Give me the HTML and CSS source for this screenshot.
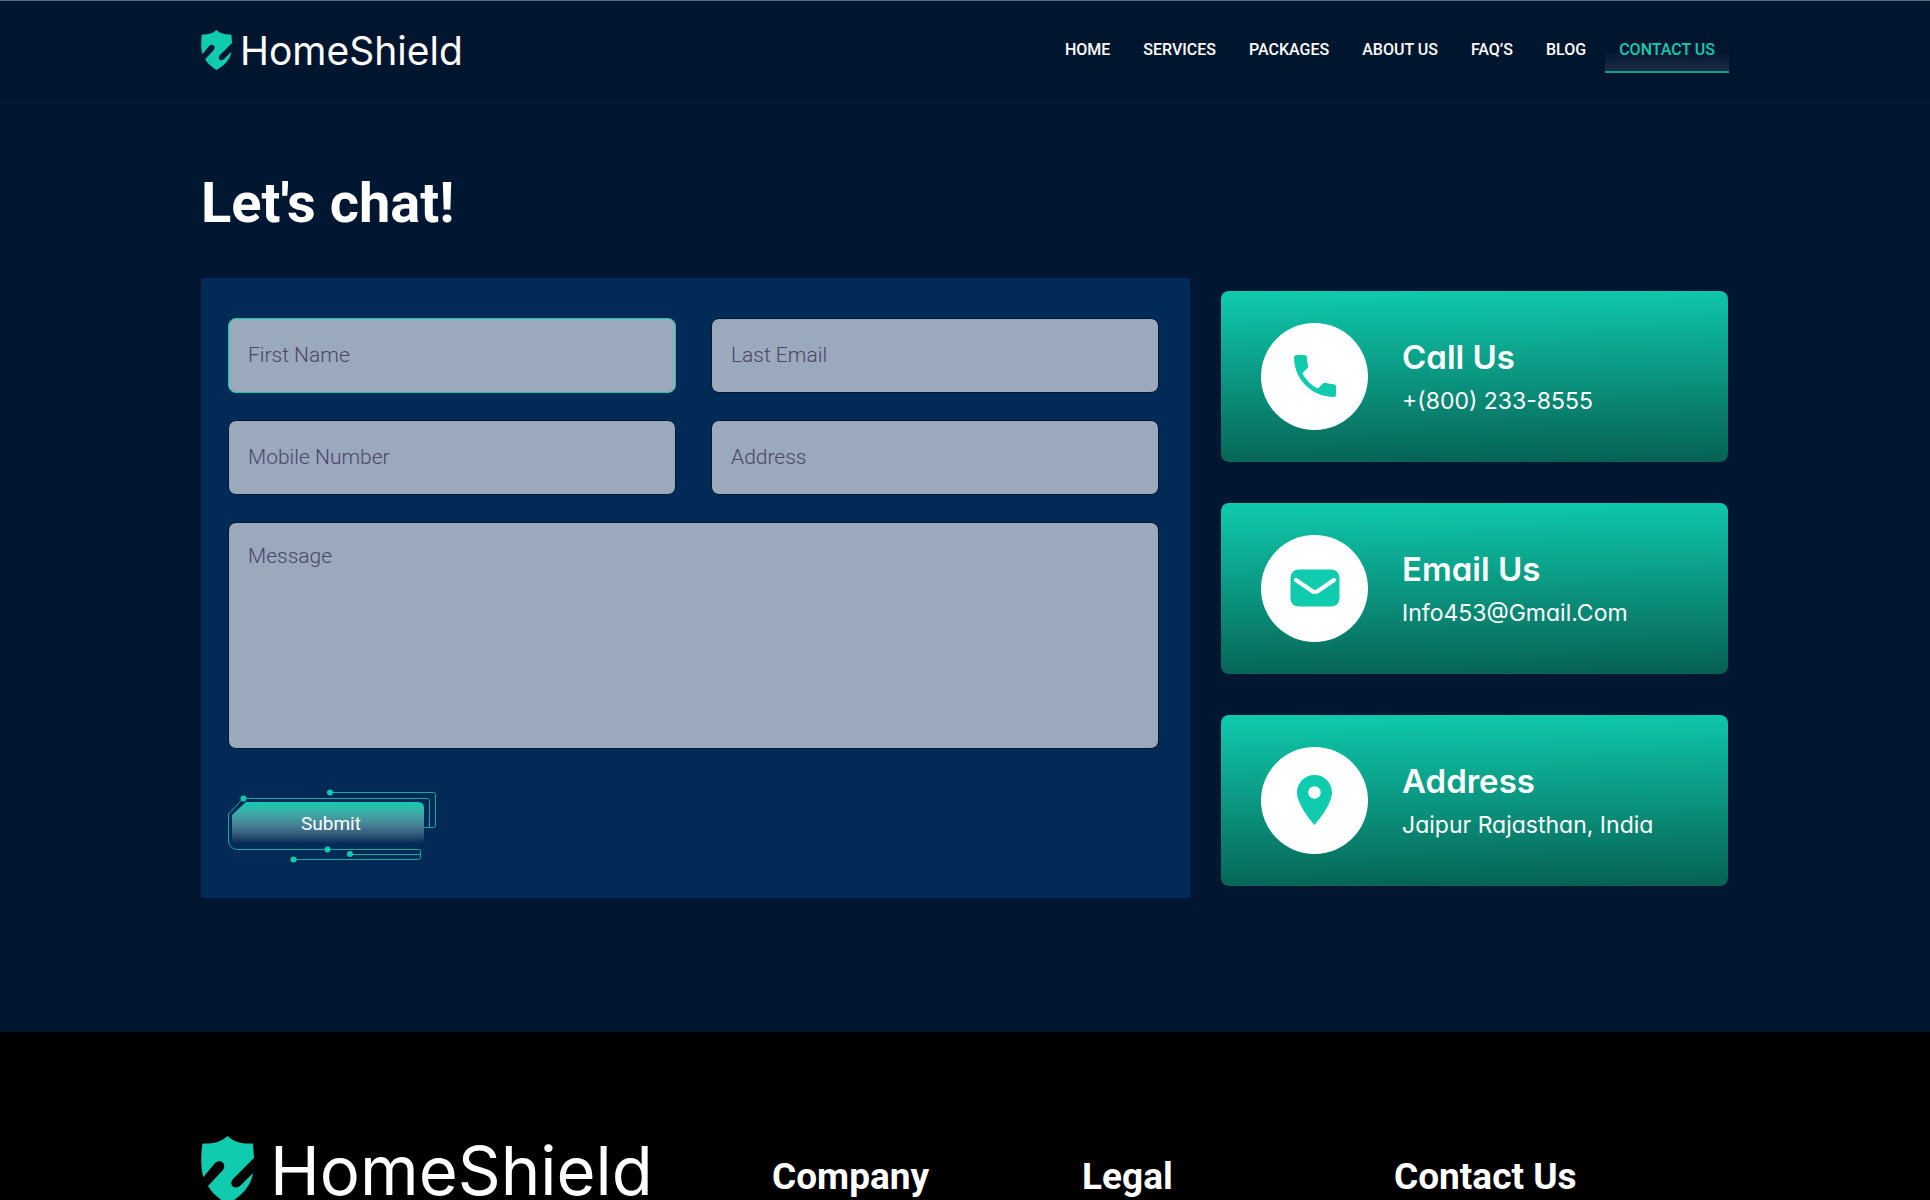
FILE: index.html
```
<!DOCTYPE html>
<html lang="en">
  <head>
    <meta charset="UTF-8" />
    <meta name="viewport" content="width=device-width, initial-scale=1.0" />
    <title>HomeShield - Contact Us</title>
    <link rel="stylesheet" href="styles.css">
  </head>
  <body>
    <header class="header">
      <div class="container header-inner">
        <a href="#" class="logo">
          <svg class="logo-mark" viewBox="0 0 53 68">
            <path d="M26.500 0C34 7 42 8 52 7.500L53 22L32 43C27 49 34 55 40 49L52 37C50 50 41 60 26.500 68C18 63 11 57 7 50L22 34C26 28 20 22 14 27L2.500 41C0 35 -0.500 20 1.500 7.500C10 8 19 7 26.500 0Z"/>
          </svg>
          <span>HomeShield</span>
        </a>
        <nav class="nav">
          <a href="#">Home</a>
          <a href="#">Services</a>
          <a href="#">Packages</a>
          <a href="#">About Us</a>
          <a href="#">FAQ’S</a>
          <a href="#">Blog</a>
          <a href="#" class="active">Contact Us</a>
        </nav>
      </div>
    </header>

    <main class="container main">
      <h1>Let's chat!</h1>
      <div class="contact">
        <form class="form">
          <input type="text" class="field current" name="first" placeholder="First Name" aria-label="First Name" />
          <input type="text" class="field" name="last" placeholder="Last Email" aria-label="Last Email" />
          <input type="tel" class="field" name="mobile" placeholder="Mobile Number" aria-label="Mobile Number" />
          <input type="text" class="field" name="address" placeholder="Address" aria-label="Address" />
          <textarea class="field message" name="message" placeholder="Message" aria-label="Message"></textarea>
          <button type="submit" class="btn">
            <svg class="btn-frame" viewBox="0 0 212 76">
              <defs>
                <linearGradient id="btnFill" x1="0" y1="0" x2="0" y2="1">
                  <stop offset="0" stop-color="#11cbae"/>
                  <stop offset="1" stop-color="#fff" stop-opacity="0"/>
                </linearGradient>
              </defs>
              <path fill="url(#btnFill)" d="M18 14H190Q196 14 196 20V50Q196 56 190 56H10Q4 56 4 50V27Z"/>
              <g class="btn-lines">
                <path d="M102 4.500H205.500Q207.500 4.500 207.500 6.500V37.500Q207.500 39.500 205.500 39.500H196"/>
                <path d="M15 10.500H199.500Q201.500 10.500 201.500 12.500V39.500"/>
                <path d="M15 10.500L0.500 26V53Q1 60 8.500 61.500H190.500Q192.500 61.500 192.500 63.500V69.500Q192.500 71.500 190.500 71.500H66"/>
                <path d="M122 66.500H192"/>
              </g>
              <g class="btn-dots">
                <circle cx="102" cy="4.500" r="3"/>
                <circle cx="15.500" cy="10.500" r="3"/>
                <circle cx="99.500" cy="61.500" r="3"/>
                <circle cx="122" cy="66" r="3"/>
                <circle cx="65.500" cy="71.500" r="3"/>
              </g>
            </svg>
            <span>Submit</span>
          </button>
        </form>

        <div class="cards">
          <div class="card">
            <div class="card-icon">
              <svg viewBox="0 0 24 24" width="56" height="56">
                <path d="M6.620 10.790c1.440 2.830 3.760 5.140 6.590 6.590l2.200-2.200c.270-.270.670-.360 1.020-.240 1.120.370 2.330.570 3.570.570.550 0 1 .450 1 1V20c0 .550-.450 1-1 1C10.610 21 3 13.390 3 4c0-.550.450-1 1-1h3.500c.550 0 1 .450 1 1 0 1.250.200 2.450.570 3.570.110.350.030.740-.250 1.020l-2.200 2.200z"/>
              </svg>
            </div>
            <div>
              <h2>Call Us</h2>
              <p>+(800) 233-8555</p>
            </div>
          </div>
          <div class="card">
            <div class="card-icon">
              <svg viewBox="0 0 50 38" width="50" height="38">
                <rect x="0.500" y="0.500" width="49" height="37" rx="8"/>
                <path class="flap" d="M6 11L22 22Q25 24 28 22L44 11"/>
              </svg>
            </div>
            <div>
              <h2>Email Us</h2>
              <p>Info453@Gmail.Com</p>
            </div>
          </div>
          <div class="card">
            <div class="card-icon">
              <svg viewBox="5 2 14 20" width="35" height="50">
                <path d="M12 2C8.130 2 5 5.130 5 9c0 5.250 7 13 7 13s7-7.750 7-13c0-3.870-3.130-7-7-7zm0 9.500a2.500 2.500 0 0 1 0-5 2.500 2.500 0 0 1 0 5z"/>
              </svg>
            </div>
            <div>
              <h2>Address</h2>
              <p>Jaipur Rajasthan, India</p>
            </div>
          </div>
        </div>
      </div>
    </main>

    <footer class="footer">
      <div class="container footer-inner">
        <a href="#" class="logo logo-big">
          <svg class="logo-mark" viewBox="0 0 53 68">
            <path d="M26.500 0C34 7 42 8 52 7.500L53 22L32 43C27 49 34 55 40 49L52 37C50 50 41 60 26.500 68C18 63 11 57 7 50L22 34C26 28 20 22 14 27L2.500 41C0 35 -0.500 20 1.500 7.500C10 8 19 7 26.500 0Z"/>
          </svg>
          <span>HomeShield</span>
        </a>
        <h3>Company</h3>
        <h3>Legal</h3>
        <h3>Contact Us</h3>
      </div>
    </footer>
  </body>
</html>
```
FILE: styles.css
```
* {
  box-sizing: border-box;
  margin: 0;
  padding: 0;
}

body {
  display: flex;
  flex-direction: column;
  height: 100vh;
  overflow: hidden;
  background: #001731;
  color: #fff;
  font-family: Roboto, sans-serif;
}

a {
  color: inherit;
  text-decoration: none;
}

.container {
  width: 100%;
  max-width: 1528px;
  margin: 0 auto;
}

/* header */
.header {
  flex: none;
  border-top: 1px solid #5c697b;
  background: #00162f;
}

.header-inner {
  display: flex;
  align-items: center;
  justify-content: space-between;
  height: 98px;
}

.logo {
  display: flex;
  align-items: center;
  gap: 8px;
  font-family: Inter, sans-serif;
  font-size: 39px;
  font-weight: 400;
  line-height: 39px;
}

.logo-mark {
  width: 31px;
  height: 40px;
  fill: #11cbae;
}

.nav {
  display: flex;
  gap: 5px;
}

.nav a {
  padding: 13px 14px 11px;
  border-bottom: 2px solid transparent;
  font-size: 16px;
  font-weight: 500;
  line-height: 20px;
  text-transform: uppercase;
}

.nav .active {
  border-color: #0e9f8c;
  background: linear-gradient(to bottom, transparent 55%, #1f2d45 100%);
  color: #11cbae;
}

/* contact */
.main {
  flex: none;
  padding: 71px 0 134px;
}

h1 {
  margin-bottom: 42px;
  font-size: 56px;
  font-weight: 700;
  line-height: 66px;
}

.contact {
  display: flex;
  align-items: center;
  gap: 31px;
  padding-right: 1px;
}

.form {
  flex: 1;
  display: grid;
  grid-template-columns: 1fr 1fr;
  gap: 27px 35px;
  padding: 40px 31px 34px 27px;
  background: #022a56;
}

.field {
  width: 100%;
  height: 75px;
  padding: 0 19px 1px;
  border: 1px solid #001731;
  border-radius: 8px;
  background: #9aa9bc;
  color: #2f2b52;
  font-family: Roboto, sans-serif;
  font-size: 21px;
  font-weight: 300;
  line-height: 26px;
  outline: none;
}

.field::placeholder {
  color: #4a4668;
  opacity: 1;
}

.field:focus,
.field.current {
  border-color: #11cbae;
}

.message {
  grid-column: 1 / -1;
  display: block;
  height: 227px;
  padding: 20px 19px;
  resize: none;
}

.btn {
  position: relative;
  justify-self: start;
  width: 212px;
  height: 76px;
  margin-top: 12px;
  padding: 0 6px 4px 0;
  border: none;
  background: none;
  color: #fff;
  font-family: Roboto, sans-serif;
  font-size: 19px;
  line-height: 24px;
  cursor: pointer;
}

.btn span {
  position: relative;
}

.btn-frame {
  position: absolute;
  inset: 0;
}

.btn-lines {
  fill: none;
  stroke: #0fae9c;
}

.btn-dots {
  fill: #11cbae;
}

.cards {
  flex: none;
  display: flex;
  flex-direction: column;
  gap: 41px;
  width: 33.2%;
}

.card {
  display: flex;
  align-items: center;
  gap: 34px;
  padding: 32px 40px;
  border-radius: 8px;
  background: linear-gradient(179deg, #0fcbae, #066152);
  font-family: Inter, sans-serif;
  font-feature-settings: "cv11";
}

.card-icon {
  flex: none;
  display: flex;
  align-items: center;
  justify-content: center;
  width: 107px;
  height: 107px;
  border-radius: 50%;
  background: #fff;
  fill: #11cbae;
}

.flap {
  fill: none;
  stroke: #fff;
  stroke-width: 4;
  stroke-linecap: round;
}

h2 {
  margin-bottom: 8px;
  padding-top: 2px;
  font-size: 33px;
  font-weight: 600;
  line-height: 40px;
}

.card p {
  font-size: 23px;
  line-height: 32px;
}

/* footer */
.footer {
  flex: 1;
  background: #000;
}

.footer-inner {
  display: grid;
  grid-template-columns: 571px 310px 312px 1fr;
  align-items: center;
  padding-top: 104px;
}

.logo-big {
  gap: 16px;
  font-size: 67px;
  line-height: 67px;
}

.logo-big .logo-mark {
  width: 53px;
  height: 68px;
}

h3 {
  padding-top: 14px;
  font-size: 37px;
  font-weight: 700;
  line-height: 44px;
}
```
